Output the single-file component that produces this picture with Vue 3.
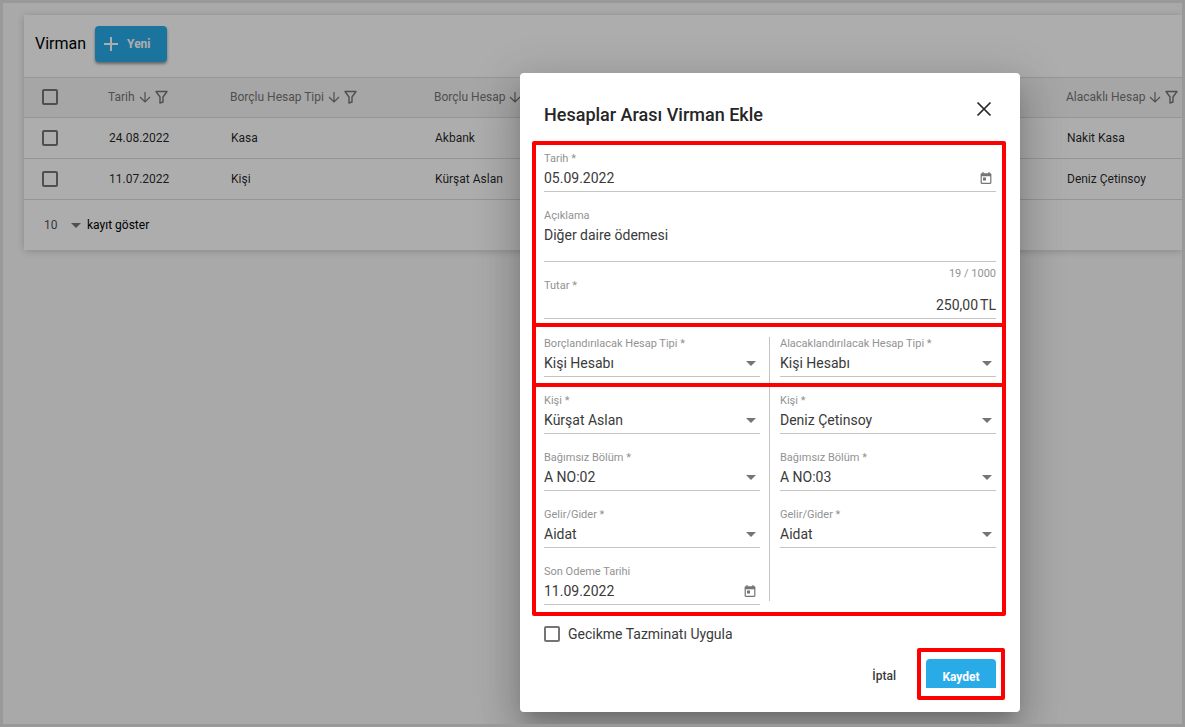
<script setup>
import { ref, reactive } from 'vue';

const columns = [
  { key: 'date', label: 'Tarih', cls: 'col-date' },
  { key: 'debtType', label: 'Borçlu Hesap Tipi', cls: 'col-type' },
  { key: 'debtAccount', label: 'Borçlu Hesap', cls: 'col-account' },
  { key: 'creditAccount', label: 'Alacaklı Hesap', cls: 'col-credit' },
];

const rows = [
  { date: '24.08.2022', debtType: 'Kasa', debtAccount: 'Akbank', creditAccount: 'Nakit Kasa' },
  { date: '11.07.2022', debtType: 'Kişi', debtAccount: 'Kürşat Aslan', creditAccount: 'Deniz Çetinsoy' },
];

const pageSize = ref('10');
const dialogOpen = ref(true);

const form = reactive({
  date: '05.09.2022',
  description: 'Diğer daire ödemesi',
  amount: '250,00',
  dueDate: '11.09.2022',
  applyLateFee: false,
});

const typeFields = [
  { id: 'debit-type', label: 'Borçlandırılacak Hesap Tipi *', value: 'Kişi Hesabı' },
  { id: 'credit-type', label: 'Alacaklandırılacak Hesap Tipi *', value: 'Kişi Hesabı' },
];

const debitFields = [
  { id: 'debit-person', label: 'Kişi *', value: 'Kürşat Aslan' },
  { id: 'debit-unit', label: 'Bağımsız Bölüm *', value: 'A NO:02' },
  { id: 'debit-category', label: 'Gelir/Gider *', value: 'Aidat' },
];

const creditFields = [
  { id: 'credit-person', label: 'Kişi *', value: 'Deniz Çetinsoy' },
  { id: 'credit-unit', label: 'Bağımsız Bölüm *', value: 'A NO:03' },
  { id: 'credit-category', label: 'Gelir/Gider *', value: 'Aidat' },
];
</script>

<template>
  <div class="page">
    <main class="card">
      <header class="card-header">
        <h1>Virman</h1>
        <button type="button" class="btn btn-new" @click="dialogOpen = true">
          <svg width="16" height="16" viewBox="0 0 16 16" aria-hidden="true">
            <path d="M8 1v14M1 8h14" fill="none" stroke="currentColor" stroke-width="2" />
          </svg>
          Yeni
        </button>
      </header>

      <table>
        <thead>
          <tr>
            <th class="col-check"><input type="checkbox" class="check" aria-label="Tümü" /></th>
            <th v-for="c in columns" :key="c.key" :class="c.cls">
              <span class="th-content">
                {{ c.label }}
                <svg width="12" height="12" viewBox="0 0 12 12" aria-hidden="true">
                  <path d="M6 1v10M1 6l5 5 5-5" fill="none" stroke="currentColor" stroke-width="1.2" />
                </svg>
                <svg width="13" height="14" viewBox="0 0 13 14" aria-hidden="true">
                  <path d="M1 1.5h11L8 7v5l-3 1V7z" fill="none" stroke="currentColor" stroke-width="1.4" stroke-linejoin="round" />
                </svg>
              </span>
            </th>
          </tr>
        </thead>
        <tbody>
          <tr v-for="r in rows" :key="r.date">
            <td class="col-check"><input type="checkbox" class="check" :aria-label="r.date" /></td>
            <td v-for="c in columns" :key="c.key">{{ r[c.key] }}</td>
          </tr>
        </tbody>
      </table>

      <footer class="pager">
        <span class="select-wrap">
          <select id="page-size" v-model="pageSize">
            <option>10</option>
          </select>
          <span class="arrow"></span>
        </span>
        <label for="page-size">kayıt göster</label>
      </footer>
    </main>

    <div v-if="dialogOpen" class="backdrop">
      <form class="dialog" role="dialog" aria-labelledby="dialog-title" @submit.prevent>
        <header class="dialog-header">
          <h2 id="dialog-title">Hesaplar Arası Virman Ekle</h2>
          <button type="button" class="close" aria-label="Kapat" @click="dialogOpen = false">
            <svg width="16" height="16" viewBox="0 0 16 16" aria-hidden="true">
              <path d="M1.5 1.5l13 13M14.5 1.5l-13 13" fill="none" stroke="currentColor" stroke-width="1.7" />
            </svg>
          </button>
        </header>

        <section class="group group-main">
          <div class="field">
            <label for="date">Tarih *</label>
            <div class="control">
              <input id="date" v-model="form.date" type="text" />
              <svg class="calendar" width="12" height="12" viewBox="2 1 20 20" aria-hidden="true">
                <path d="M19 3h-1V1h-2v2H8V1H6v2H5c-1.100 0-2 .9-2 2v14c0 1.100.9 2 2 2h14c1.100 0 2-.9 2-2V5c0-1.100-.9-2-2-2zm0 16H5V8h14zM7 10h5v5H7z" />
              </svg>
            </div>
          </div>
          <div class="field">
            <label for="description">Açıklama</label>
            <div class="control">
              <textarea id="description" v-model="form.description" maxlength="1000"></textarea>
            </div>
          </div>
          <div class="counter">{{ form.description.length }} / 1000</div>
          <div class="field">
            <label for="amount">Tutar *</label>
            <div class="control">
              <input id="amount" v-model="form.amount" class="amount" type="text" />
              <span class="suffix">TL</span>
            </div>
          </div>
        </section>

        <section class="group group-types">
          <div class="column">
            <div class="field">
              <label :for="typeFields[0].id">{{ typeFields[0].label }}</label>
              <div class="control">
                <select :id="typeFields[0].id"><option>{{ typeFields[0].value }}</option></select>
                <span class="arrow"></span>
              </div>
            </div>
          </div>
          <div class="divider"></div>
          <div class="column">
            <div class="field">
              <label :for="typeFields[1].id">{{ typeFields[1].label }}</label>
              <div class="control">
                <select :id="typeFields[1].id"><option>{{ typeFields[1].value }}</option></select>
                <span class="arrow"></span>
              </div>
            </div>
          </div>
        </section>

        <section class="group group-details">
          <div class="column">
            <div v-for="f in debitFields" :key="f.id" class="field">
              <label :for="f.id">{{ f.label }}</label>
              <div class="control">
                <select :id="f.id"><option>{{ f.value }}</option></select>
                <span class="arrow"></span>
              </div>
            </div>
            <div class="field">
              <label for="due-date">Son Odeme Tarihi</label>
              <div class="control">
                <input id="due-date" v-model="form.dueDate" type="text" />
                <svg class="calendar" width="12" height="12" viewBox="2 1 20 20" aria-hidden="true">
                  <path d="M19 3h-1V1h-2v2H8V1H6v2H5c-1.100 0-2 .9-2 2v14c0 1.100.9 2 2 2h14c1.100 0 2-.9 2-2V5c0-1.100-.9-2-2-2zm0 16H5V8h14zM7 10h5v5H7z" />
                </svg>
              </div>
            </div>
          </div>
          <div class="divider"></div>
          <div class="column">
            <div v-for="f in creditFields" :key="f.id" class="field">
              <label :for="f.id">{{ f.label }}</label>
              <div class="control">
                <select :id="f.id"><option>{{ f.value }}</option></select>
                <span class="arrow"></span>
              </div>
            </div>
          </div>
        </section>

        <label class="late-fee">
          <input v-model="form.applyLateFee" type="checkbox" class="check" />
          Gecikme Tazminatı Uygula
        </label>

        <footer class="dialog-actions">
          <button type="button" class="btn-cancel" @click="dialogOpen = false">İptal</button>
          <span class="highlight">
            <button type="submit" class="btn btn-save">Kaydet</button>
          </span>
        </footer>
      </form>
    </div>
  </div>
</template>

<style>
body {
  margin: 0;
}
</style>

<style scoped>
* {
  box-sizing: border-box;
}

.page {
  position: relative;
  min-height: 100vh;
  padding: 12px 0 0 21px;
  border: 3px solid #999;
  background: #fafafa;
  overflow: hidden;
  font-family: Roboto, 'Liberation Sans', sans-serif;
  font-size: 12px;
  color: rgba(0, 0, 0, 0.87);
}

input,
select,
textarea,
button {
  margin: 0;
  padding: 0;
  border: 0;
  outline: 0;
  background: none;
  font: inherit;
  color: inherit;
}

select {
  appearance: none;
}

.card {
  background: #fff;
  box-shadow: 0 1px 8px rgba(0, 0, 0, 0.2);
}

.card-header {
  display: flex;
  align-items: flex-start;
  gap: 9px;
  height: 62px;
  padding: 11px;
}

h1 {
  margin: 0;
  font-size: 16px;
  font-weight: 400;
  line-height: 36px;
  color: #000;
}

.btn {
  border-radius: 4px;
  background: #29abe8;
  color: #fff;
  font-weight: 700;
}

.btn-new {
  display: flex;
  align-items: center;
  gap: 8px;
  height: 36px;
  padding: 0 16px 0 8px;
  box-shadow: 0 2px 3px rgba(0, 0, 0, 0.4);
}

table {
  width: 100%;
  table-layout: fixed;
  border-collapse: separate;
  border-spacing: 0;
  border-bottom: 1px solid #dcdcdc;
}

th,
td {
  height: 41px;
  padding: 0;
  border-top: 1px solid #dcdcdc;
  text-align: left;
  white-space: nowrap;
}

th {
  height: 40px;
  padding-bottom: 2px;
  background: #f5f5f5;
  font-weight: 400;
  color: #757575;
}

td {
  padding-left: 1px;
}

.col-check {
  width: 84px;
  padding-left: 18px;
}

.col-date {
  width: 122px;
}

.col-type {
  width: 204px;
}

.col-credit {
  width: 116px;
}

.th-content {
  display: flex;
  align-items: center;
  gap: 4px;
}

.check {
  display: block;
  flex: none;
  appearance: none;
  width: 16px;
  height: 16px;
  border: 2px solid #757575;
  border-radius: 2px;
}

.check:checked {
  background: #29abe8;
}

.pager {
  display: flex;
  align-items: center;
  gap: 6px;
  height: 50px;
  padding-left: 20px;
  color: #000;
}

.select-wrap {
  display: flex;
  align-items: center;
  width: 37px;
  color: #555;
}

.select-wrap select {
  flex: 1;
  min-width: 0;
}

.arrow {
  flex: none;
  border: 5px solid transparent;
  border-top-color: #757575;
  border-bottom: 0;
  pointer-events: none;
}

.backdrop {
  position: absolute;
  inset: 0;
  display: flex;
  align-items: flex-start;
  justify-content: flex-end;
  padding: 70px 162px 0 0;
  background: rgba(0, 0, 0, 0.32);
}

.dialog {
  width: 500px;
  padding: 28px 14px 12px 12px;
  border-radius: 4px;
  background: #fff;
  box-shadow:
    0 11px 15px -7px rgba(0, 0, 0, 0.2),
    0 24px 38px 3px rgba(0, 0, 0, 0.14),
    0 9px 46px 8px rgba(0, 0, 0, 0.12);
  font-size: 14px;
  color: #3a3a3a;
}

.dialog-header {
  display: flex;
  align-items: flex-start;
  justify-content: space-between;
  height: 40px;
  padding: 0 14px 0 12px;
  color: #262626;
}

h2 {
  margin: 0;
  font-size: 18px;
  font-weight: 500;
  line-height: 28px;
}

.close {
  height: 16px;
  line-height: 0;
}

.group {
  padding: 6px 6px 4px 8px;
  border: 4px solid #f00;
  border-radius: 2px;
}

.group + .group {
  margin-top: -4px;
}

.group-types,
.group-details {
  display: grid;
  grid-template-columns: 1fr 20px 1fr;
}

.group-types {
  padding-top: 9px;
  padding-bottom: 6px;
}

.group-details {
  padding-bottom: 7px;
}

.field + .field {
  margin-top: 16px;
}

.counter + .field {
  margin-top: -3px;
}

.field label,
.counter {
  display: block;
  font-size: 11px;
  line-height: 15px;
  color: #929292;
}

.counter {
  padding-top: 4px;
  text-align: right;
}

.control {
  display: flex;
  align-items: center;
  padding-bottom: 1px;
  border-bottom: 1px solid #c4c4c4;
}

.control input,
.control select {
  flex: 1;
  min-width: 0;
  height: 24px;
}

.control textarea {
  display: block;
  width: 100%;
  height: 37px;
  line-height: 24px;
  resize: none;
}

.control .arrow {
  margin-right: 4px;
}

.control .amount {
  text-align: right;
}

.suffix {
  padding-left: 2px;
}

.calendar {
  margin-right: 4px;
  fill: #757575;
}

.divider {
  width: 1px;
  margin-left: 9px;
  background: #c4c4c4;
}

.group-types .divider {
  margin-top: 1px;
  margin-bottom: -6px;
}

.group-details .divider {
  margin-top: -6px;
  margin-bottom: 4px;
}

.late-fee {
  display: flex;
  align-items: center;
  gap: 8px;
  width: max-content;
  margin: 6px 12px 0;
  line-height: 24px;
}

.dialog-actions {
  display: flex;
  align-items: center;
  justify-content: flex-end;
  gap: 21px;
  margin-top: 2px;
  padding-right: 1px;
}

.btn-cancel {
  height: 36px;
  padding-top: 4px;
  font-size: 12px;
  font-weight: 500;
}

.highlight {
  padding: 7px 5px 8px;
  border: 4px solid #f00;
  border-radius: 2px;
}

.btn-save {
  display: block;
  width: 70px;
  height: 29px;
  padding-top: 6px;
  border-radius: 4px 4px 0 0;
  font-size: 12px;
}
</style>
